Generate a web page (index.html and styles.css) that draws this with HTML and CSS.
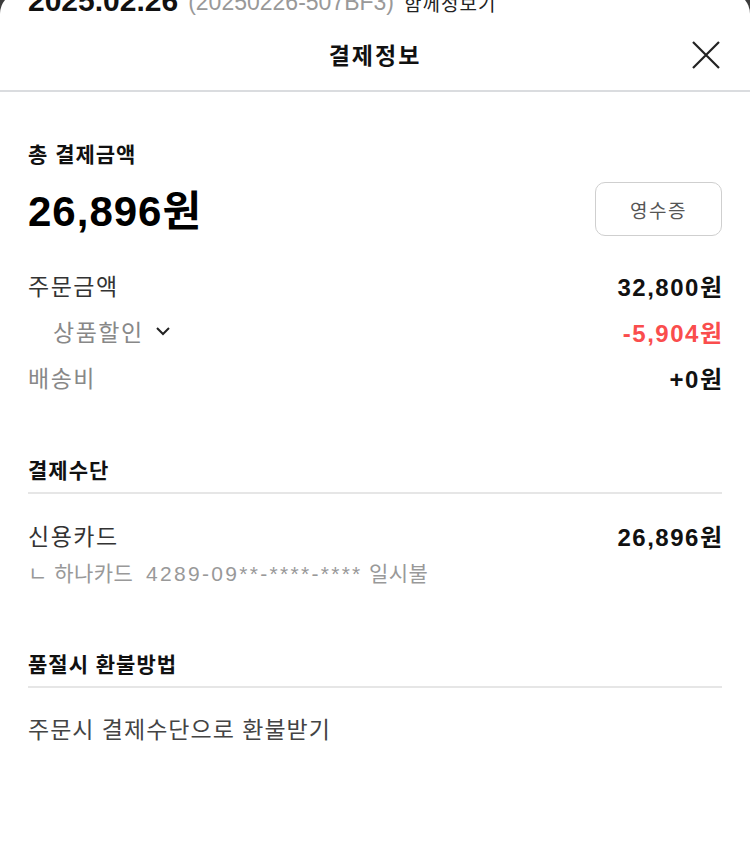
FILE: index.html
```html
<!DOCTYPE html>
<html lang="ko">
<head>
<meta charset="utf-8">
<link rel="stylesheet" href="styles.css">
</head>
<body>
<div class="sheet">
  <div class="peek">
    <span class="peek-date">2025.02.26</span>
    <span class="peek-no">(20250226-507BF3)</span>
    <span class="peek-link">함께정보기</span>
  </div>
  <header class="head">
    <h1 class="title">결제정보</h1>
    <button class="close" aria-label="닫기">
      <svg width="28" height="28" viewBox="0 0 28 28"><path d="M1 1 L27 27 M27 1 L1 27" stroke="#222" stroke-width="2.2" fill="none"/></svg>
    </button>
  </header>
  <main class="body">
    <section class="sum">
      <h2 class="label-strong">총 결제금액</h2>
      <div class="total-row">
        <div class="total">26,896원</div>
        <button class="receipt">영수증</button>
      </div>
      <div class="rows">
        <div class="row"><span class="k dark">주문금액</span><span class="v">32,800원</span></div>
        <div class="row"><span class="k sub">상품할인<svg class="chev" width="16" height="10" viewBox="0 0 16 10"><path d="M2 2 L8 8 L14 2" stroke="#222" stroke-width="2" fill="none"/></svg></span><span class="v red">-5,904원</span></div>
        <div class="row"><span class="k">배송비</span><span class="v">+0원</span></div>
      </div>
    </section>
    <section class="method">
      <h2 class="sec-title">결제수단</h2>
      <div class="row first"><span class="k dark">신용카드</span><span class="v">26,896원</span></div>
      <div class="card-line">ㄴ 하나카드&nbsp; <span class="card-no">4289-09**-****-****</span> 일시불</div>
    </section>
    <section class="refund">
      <h2 class="sec-title">품절시 환불방법</h2>
      <p class="refund-text">주문시 결제수단으로 환불받기</p>
    </section>
  </main>
</div>
</body>
</html>
```
FILE: styles.css
```css
* { box-sizing: border-box; }
html, body { margin: 0; padding: 0; }
body {
  background: #3c3c3c;
  font-family: "Liberation Sans", "Noto Sans CJK KR", sans-serif;
  color: #111;
  overflow: hidden;
}
.sheet {
  background: #fff;
  margin-top: -8px;
  border-radius: 22px 22px 0 0;
  min-height: 900px;
}
.peek {
  height: 26px;
  overflow: hidden;
  display: flex;
  align-items: flex-end;
  gap: 10px;
  padding: 0 28px;
  white-space: nowrap;
}
.peek span { line-height: 1; display: block; }
.peek-date { font-size: 30px; font-weight: 700; color: #111; position: relative; top: -2px; }
.peek-no { font-size: 23px; color: #999; position: relative; top: -4px; }
.peek-link { font-size: 19px; letter-spacing: 1px; color: #222; position: relative; top: -4px; }
.head {
  height: 74px;
  border-bottom: 2px solid #dadcdf;
  display: flex;
  align-items: center;
  justify-content: center;
  position: relative;
}
.title {
  margin: 0;
  font-size: 23px;
  letter-spacing: 2px;
  font-weight: 700;
  color: #111;
}
.close {
  position: absolute;
  right: 30px;
  top: 23px;
  border: 0;
  background: none;
  padding: 0;
  width: 28px;
  height: 28px;
}
.close svg { display: block; }
.body { padding: 0 28px; }
.label-strong {
  margin: 49px 0 0;
  font-size: 21px;
  letter-spacing: 1px;
  line-height: 28px;
  font-weight: 700;
  color: #111;
}
.total-row {
  margin-top: 13px;
  height: 54px;
  display: flex;
  justify-content: space-between;
  align-items: center;
}
.total {
  font-size: 42px;
  line-height: 48px;
  padding-top: 6px;
  letter-spacing: 1px;
  font-weight: 700;
  color: #000;
}
.receipt {
  width: 127px;
  height: 54px;
  border: 1.5px solid #cfcfcf;
  border-radius: 10px;
  background: #fff;
  font-family: inherit;
  font-size: 19px;
  letter-spacing: 1.5px;
  color: #555;
}
.rows {
  margin-top: 34px;
  display: flex;
  flex-direction: column;
  gap: 16px;
}
.row {
  display: flex;
  justify-content: space-between;
  align-items: center;
  height: 30px;
}
.k { font-size: 23px; letter-spacing: 1.5px; color: #888; display: flex; align-items: center; }
.k.dark { color: #333; }
.k.sub { padding-left: 25px; color: #888; }
.chev { margin-left: 11px; }
.v { font-size: 24px; letter-spacing: 1.5px; font-weight: 700; color: #111; margin-right: -1.5px; }
.v.red { color: #fa4d4d; }
.method { margin-top: 65px; }
.sec-title {
  margin: 0;
  font-size: 21px;
  letter-spacing: 1px;
  line-height: 28px;
  font-weight: 700;
  color: #111;
  padding-bottom: 7px;
  border-bottom: 2px solid #e6e6e6;
}
.row.first { margin-top: 26px; }
.card-line {
  margin-top: 10px;
  font-size: 21px;
  letter-spacing: 0.5px;
  line-height: 28px;
  color: #999;
  white-space: nowrap;
}
.card-no { letter-spacing: 2.3px; }
.refund { margin-top: 63px; }
.refund-text {
  margin: 27px 0 0;
  font-size: 23px;
  letter-spacing: 1px;
  line-height: 30px;
  color: #444;
}
```
